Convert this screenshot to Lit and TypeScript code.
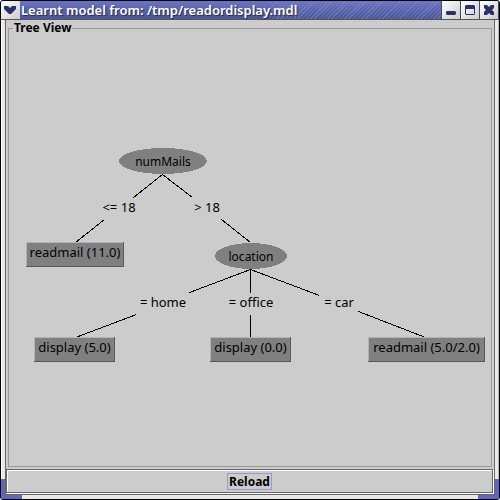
import { LitElement, html, svg, css } from "lit";
import { customElement } from "lit/decorators.js";

type Node = { kind: "split" | "leaf"; label: string; x: number; y: number; w: number; h: number };
type Edge = { x1: number; y1: number; x2: number; y2: number };
type Test = { label: string; x: number; y: number };

const NODES: Node[] = [
  { kind: "split", label: "numMails", x: 119, y: 148, w: 88, h: 26 },
  { kind: "leaf", label: "readmail (11.0)", x: 26, y: 242, w: 98, h: 25 },
  { kind: "split", label: "location", x: 215, y: 243, w: 72, h: 26 },
  { kind: "leaf", label: "display (5.0)", x: 34, y: 337, w: 81, h: 25 },
  { kind: "leaf", label: "display (0.0)", x: 210, y: 337, w: 81, h: 25 },
  { kind: "leaf", label: "readmail (5.0/2.0)", x: 368, y: 337, w: 117, h: 25 },
];

const EDGES: Edge[] = [
  { x1: 162, y1: 174, x2: 133, y2: 197 },
  { x1: 104, y1: 219, x2: 75, y2: 242 },
  { x1: 162, y1: 174, x2: 192, y2: 197 },
  { x1: 221, y1: 219, x2: 250, y2: 242 },
  { x1: 250, y1: 269, x2: 189, y2: 292 },
  { x1: 136, y1: 314, x2: 75, y2: 337 },
  { x1: 250, y1: 269, x2: 250, y2: 292 },
  { x1: 250, y1: 314, x2: 250, y2: 337 },
  { x1: 250, y1: 269, x2: 319, y2: 295 },
  { x1: 358, y1: 311, x2: 425, y2: 337 },
];

const TESTS: Test[] = [
  { label: "<= 18", x: 119, y: 212 },
  { label: "> 18", x: 207, y: 212 },
  { label: "= home", x: 163, y: 307 },
  { label: "= office", x: 251, y: 307 },
  { label: "= car", x: 339, y: 307 },
];

@customElement("tree-view")
export class TreeView extends LitElement {
  static styles = css`
    :host { display: block; flex: 1; min-height: 0; }
    .canvas { display: block; width: 100%; height: 100%; overflow: visible; }
    .edge { stroke: #000; stroke-width: 1; shape-rendering: crispEdges; }
    .body { fill: #808080; shape-rendering: crispEdges; }
    .light { fill: none; stroke: #b3b3b3; shape-rendering: crispEdges; }
    .dark { fill: none; stroke: #595959; shape-rendering: crispEdges; }
    text { font: 13px "Noto Sans", sans-serif; fill: #000; text-anchor: middle; }
    .split { font-size: 12px; }
  `;

  private node(n: Node) {
    const cx = n.x + n.w / 2;
    const right = n.x + n.w - 0.5;
    const bottom = n.y + n.h - 0.5;
    return n.kind === "split"
      ? svg`<ellipse class="body" cx=${cx} cy=${n.y + n.h / 2} rx=${n.w / 2} ry=${n.h / 2}></ellipse>
          <text class="split" x=${cx} y=${n.y + 18}>${n.label}</text>`
      : svg`<rect class="body" x=${n.x} y=${n.y} width=${n.w} height=${n.h}></rect>
          <path class="light" d="M${n.x + 0.5} ${bottom} V${n.y + 0.5} H${right}"></path>
          <path class="dark" d="M${n.x} ${bottom} H${right} V${n.y}"></path>
          <text x=${cx} y=${n.y + 15}>${n.label}</text>`;
  }

  render() {
    return html`<svg class="canvas" role="img" aria-label="Decision tree">
      <g transform="translate(-9 -36)">
        ${EDGES.map((e) => svg`<line class="edge" x1=${e.x1 + 0.5} y1=${e.y1 + 0.5} x2=${e.x2 + 0.5} y2=${e.y2 + 0.5}></line>`)}
        ${NODES.map((n) => this.node(n))}
        ${TESTS.map((t) => svg`<text x=${t.x} y=${t.y}>${t.label}</text>`)}
      </g>
    </svg>`;
  }
}

@customElement("app-root")
export class AppRoot extends LitElement {
  static styles = css`
    :host {
      display: block;
      height: 100vh;
      font: 12px "Noto Sans", sans-serif;
      color: #000;
    }
    * { box-sizing: border-box; }
    .window {
      position: relative;
      display: flex;
      flex-direction: column;
      height: 100%;
      background: #000;
      border: 1px solid #000;
      border-radius: 3px;
      overflow: hidden;
    }
    .titlebar {
      display: flex;
      height: 19px;
      border-bottom: 1px solid #55555f;
      background:
        repeating-linear-gradient(135deg, #8c94d666 0 1px, transparent 1px 3px),
        linear-gradient(#6a74c4, #4c5592);
    }
    .title {
      margin: 0;
      padding: 0 3px 0 1px;
      font: 600 13px/18px "Noto Sans", sans-serif;
      color: #fff;
      text-shadow: 1px 1px 1px #22284e;
      background: linear-gradient(#6a74c4, #4c5592) 0 0 / calc(100% - 30px) 100% no-repeat;
      white-space: nowrap;
    }
    .controls { display: flex; gap: 1px; margin-left: auto; background: #44486a; padding: 0 1px; }
    .control {
      display: block;
      width: 18px;
      height: 18px;
      padding: 0;
      border: 0;
      background: linear-gradient(135deg, #fff, #ccc);
    }
    .control svg { display: block; width: 18px; height: 18px; fill: #2b3166; }
    .menu { width: 19px; }
    .frame {
      flex: 1;
      display: flex;
      min-height: 0;
      padding: 0 4px 4px;
      background: linear-gradient(90deg, #fff 0 1px, #ece8e8 1px calc(100% - 1px), #bbb calc(100% - 1px));
    }
    .content {
      flex: 1;
      display: flex;
      flex-direction: column;
      min-width: 0;
      background: #ccc;
      border: 1px solid #666;
      border-top: 0;
    }
    .panel {
      flex: 1;
      display: flex;
      min-width: 0;
      min-height: 0;
      margin: 0 2px 2px;
      padding: 0;
      border: 1px solid #999;
    }
    .legend {
      margin-left: 4px;
      padding: 0 1px;
      font-weight: bold;
      line-height: 16px;
    }
    .reload {
      flex: none;
      height: 24px;
      margin: 0 1px 1px 0;
      padding: 0;
      border: 1px solid #666;
      box-shadow: inset 1px 1px #fff, 1px 1px #fff;
      background: #ccc;
      font: bold 12px/15px "Noto Sans", sans-serif;
      color: #000;
    }
    .focus { display: inline-block; border: 1px solid #9999cc; padding: 0 1px; }
    .grip {
      position: absolute;
      bottom: 0;
      width: 21px;
      height: 20px;
      border: solid #5c67bd;
      border-width: 0 0 4px;
    }
    .grip.left { left: 0; border-left-width: 4px; }
    .grip.right { right: 0; border-right-width: 4px; }
  `;

  render() {
    return html`
      <div class="window">
        <header class="titlebar">
          <button class="control menu" aria-label="Window menu">
            <svg viewBox="0 0 18 18"><path d="M3 5h4l2 2 2-2h4v3l-5 5H8L3 8z"></path></svg>
          </button>
          <h1 class="title">Learnt model from: /tmp/readordisplay.mdl</h1>
          <div class="controls">
            <button class="control" aria-label="Minimize">
              <svg viewBox="0 0 18 18"><path d="M5 10h8l1 1v2l-1 1H5l-1-1v-2z"></path></svg>
            </button>
            <button class="control" aria-label="Maximize">
              <svg viewBox="0 0 18 18"><path fill-rule="evenodd" d="M5 4h8l1 1v8l-1 1H5l-1-1V5zM5 8v5h8V8z"></path></svg>
            </button>
            <button class="control" aria-label="Close">
              <svg viewBox="0 0 18 18"><path d="M4 4h3l2 2 2-2h3v3l-2 2 2 2v3h-3l-2-2-2 2H4v-3l2-2-2-2z"></path></svg>
            </button>
          </div>
        </header>
        <main class="frame">
          <div class="content">
            <fieldset class="panel">
              <legend class="legend">Tree View</legend>
              <tree-view></tree-view>
            </fieldset>
            <button class="reload"><span class="focus">Reload</span></button>
          </div>
        </main>
        <span class="grip left"></span>
        <span class="grip right"></span>
      </div>
    `;
  }
}
